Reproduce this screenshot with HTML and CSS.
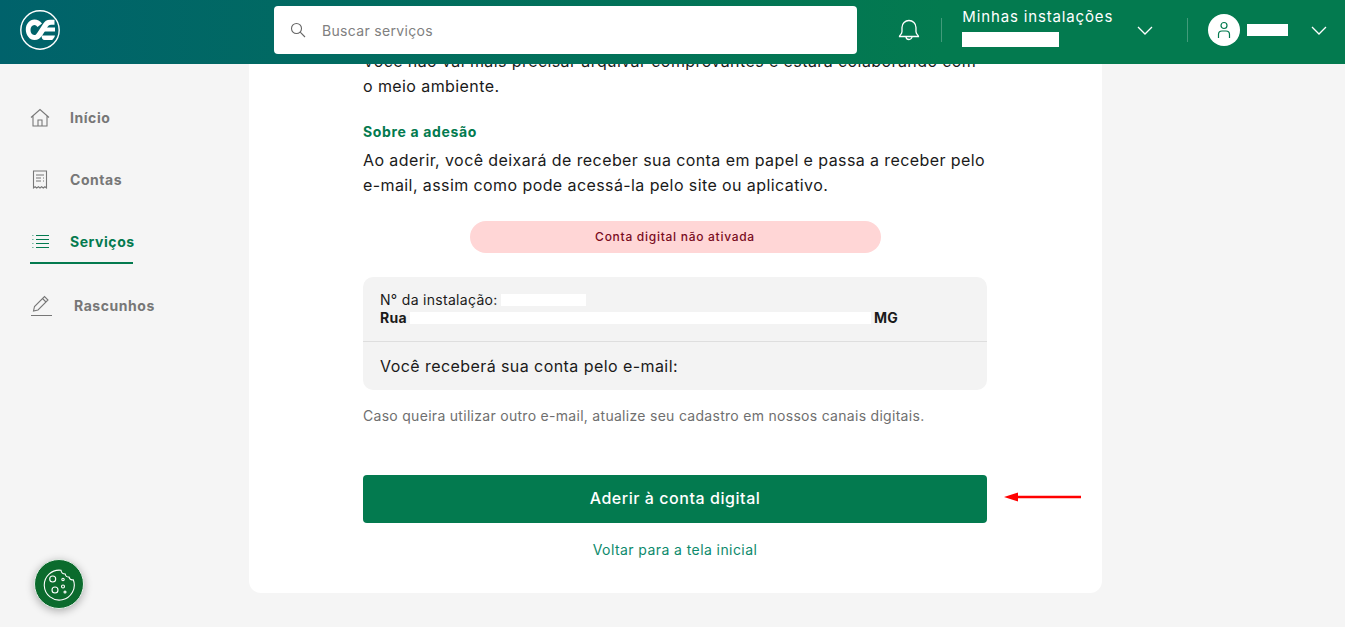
FILE: index.html
```html
<!DOCTYPE html>
<html lang="pt-BR">
<head>
    <meta charset="UTF-8">
    <title>Conta digital</title>
    <link rel="stylesheet" href="styles.css">
</head>
<body>
    <header class="topbar">
        <svg class="logo" width="40" height="40" viewBox="0 0 40 40" fill="none">
            <circle cx="20" cy="20" r="19.2" stroke="#fff" stroke-width="1.4"/>
            <path d="M22 13.500c-2-2.800-4.600-4-7.500-4C9.500 9.500 5.800 14 5.800 19.500S9.500 30 14.500 30c3.600 0 6-2 8-5l5-8c1-1.500 2-2.300 3.500-2.300h3.500V9.800H30c-3.300 0-5.300 1.500-7 4.200l-5.500 8.500c-1 1.600-1.900 2.600-3.300 2.600-2.300 0-3.700-2.200-3.700-5s1.500-5 3.800-5c1.300 0 2.300.7 3.200 2z" fill="#fff"/>
            <path d="M25 17.500h10v4H23zM21.500 25.500h13.500c-.6 2-1.500 3.400-2.800 4.500H24.500c-1.700 0-2.800-1-3-4.500z" fill="#fff"/>
        </svg>
        <div class="search">
            <svg width="16" height="16" viewBox="0 0 16 16" fill="none" stroke="#666" stroke-width="1.100">
                <circle cx="6.500" cy="6.500" r="5"/>
                <path d="M10.200 10.200l4.800 4.800"/>
            </svg>
            <span>Buscar serviços</span>
        </div>
        <svg class="bell" width="22" height="24" viewBox="0 0 22 24" fill="none" stroke="#fff" stroke-width="1.300">
            <path d="M1.500 18.500c0-1.500 2.500-2 2.500-5V9.500a7 7 0 0 1 14 0v4c0 3 2.500 3.500 2.500 5z"/>
            <path d="M8 18.500a3 3 0 0 0 6 0"/>
        </svg>
        <div class="divider"></div>
        <div class="installs">
            <span class="installs-title">Minhas instalações</span>
            <span class="mask mask-install"></span>
        </div>
        <svg class="chevron chevron-installs" width="16" height="9" viewBox="0 0 16 9" fill="none" stroke="#fff" stroke-width="1.300"><path d="M1 1l7 7 7-7"/></svg>
        <div class="divider"></div>
        <div class="avatar">
            <svg width="14" height="18" viewBox="0 0 14 18" fill="none" stroke="#037a4f" stroke-width="1.200">
                <circle cx="7" cy="4.500" r="3"/>
                <path d="M1.500 17v-3.500c0-2 1.500-3.500 3.500-3.500h4c2 0 3.500 1.500 3.500 3.500V17"/>
            </svg>
        </div>
        <span class="mask mask-user"></span>
        <svg class="chevron" width="16" height="9" viewBox="0 0 16 9" fill="none" stroke="#fff" stroke-width="1.300"><path d="M1 1l7 7 7-7"/></svg>
    </header>

    <div class="layout">
        <nav class="sidebar">
            <a class="nav-item">
                <svg width="20" height="20" viewBox="0 0 20 20" fill="none" stroke="#777" stroke-width="1.100">
                    <path d="M1 9.500L10 1.500l9 8M3 8v10h14V8M8 18v-6h4v6"/>
                </svg>
                <span>Início</span>
            </a>
            <a class="nav-item">
                <svg width="20" height="20" viewBox="0 0 20 20" fill="none" stroke="#777" stroke-width="1.100">
                    <path d="M3.500 1h13v17l-1.600-1.200-1.600 1.200-1.700-1.200L10 18l-1.600-1.200L6.700 18l-1.600-1.200L3.500 18z"/>
                    <path d="M6 5h8M6 8h5M13 8h1M6 11h5M13 11h1"/>
                </svg>
                <span>Contas</span>
            </a>
            <a class="nav-item active">
                <svg width="20" height="20" viewBox="0 0 20 20" fill="none" stroke="#037a4f" stroke-width="1.200">
                    <path d="M6 3.500h13M6 7.500h13M6 11.500h13M6 15.500h13"/>
                    <path d="M2.500 3.500h.8M2.500 7.500h.8M2.500 11.500h.8M2.500 15.500h.8"/>
                </svg>
                <span>Serviços</span>
            </a>
            <a class="nav-item draft">
                <svg width="24" height="22" viewBox="0 0 24 22" fill="none" stroke="#777" stroke-width="1.100">
                    <path d="M3.500 16l1-4.500L14.500 1.500l3.500 3.500-10 10z"/>
                    <path d="M12.500 3.500l3.500 3.500M1 20.500h21"/>
                </svg>
                <span>Rascunhos</span>
            </a>
            <button class="cookie">
                <svg width="34" height="34" viewBox="0 0 34 34" fill="none" stroke="#fff" stroke-width="1.100">
                    <path d="M19 3.200C19.300 5.500 21 7 23.200 7 23.500 9 25 10.300 27 10 27.600 12 29.300 13.200 31.300 12.800A15 15 0 1 1 19 3.200z"/>
                    <circle cx="10.700" cy="12" r="3"/>
                    <circle cx="13" cy="23" r="3"/>
                    <circle cx="21" cy="12.500" r="1.200"/>
                    <circle cx="21" cy="19.500" r="1.500"/>
                    <circle cx="23" cy="25" r="1"/>
                </svg>
            </button>
        </nav>

        <main class="content">
            <section class="card">
                <p class="text">Você não vai mais precisar arquivar comprovantes e estará colaborando com<br>o meio ambiente.</p>
                <h2 class="subtitle">Sobre a adesão</h2>
                <p class="text">Ao aderir, você deixará de receber sua conta em papel e passa a receber pelo<br>e-mail, assim como pode acessá-la pelo site ou aplicativo.</p>
                <div class="status">Conta digital não ativada</div>
                <div class="info">
                    <div class="info-top">
                        <div>N° da instalação:<span class="mask mask-number"></span></div>
                        <div class="address">Rua<span class="mask mask-address"></span>MG</div>
                    </div>
                    <div class="info-bottom">Você receberá sua conta pelo e-mail:</div>
                </div>
                <p class="note">Caso queira utilizar outro e-mail, atualize seu cadastro em nossos canais digitais.</p>
                <div class="action">
                    <button class="primary">Aderir à conta digital</button>
                    <svg class="arrow" width="80" height="12" viewBox="0 0 80 12">
                        <path d="M1 6L15 1.500V4.800H78V7.200H15V10.500z" fill="#f00"/>
                    </svg>
                </div>
                <a class="back">Voltar para a tela inicial</a>
            </section>
        </main>
    </div>
</body>
</html>
```

FILE: styles.css
```css
* {
    box-sizing: border-box;
}
html, body {
    height: 100%;
}
body {
    margin: 0;
    overflow: hidden;
    font-family: Inter, "Liberation Sans", sans-serif;
    background-color: #f5f5f5;
    color: #1a1a1a;
}
.topbar {
    height: 64px;
    display: flex;
    align-items: center;
    padding: 0 18px 4px 20px;
    background: linear-gradient(90deg, #00626b 0%, #037a4f 70%);
    color: white;
    position: relative;
    z-index: 2;
}
.logo {
    flex: none;
}
.search {
    width: 584px;
    height: 48px;
    margin-left: 214px;
    padding-left: 16px;
    display: flex;
    align-items: center;
    gap: 16px;
    background: white;
    border-radius: 4px;
    color: #808080;
    font-size: 14px;
    letter-spacing: 0.33px;
}
.bell {
    margin: 0 21px 0 41px;
}
.divider {
    width: 1px;
    height: 24px;
    background-color: rgba(255,255,255,0.25);
}
.installs {
    width: 175px;
    margin: -5px 0 0 20px;
    display: flex;
    flex-direction: column;
    gap: 6px;
}
.installs-title {
    font-size: 15px;
    line-height: 18px;
    letter-spacing: 0.85px;
}
.mask {
    display: inline-block;
    background: white;
}
.mask-install {
    width: 97px;
    height: 15px;
}
.chevron-installs {
    margin-right: 34px;
}
.avatar {
    width: 32px;
    height: 32px;
    margin: 0 7px 0 20px;
    display: flex;
    align-items: center;
    justify-content: center;
    border-radius: 50%;
    background: white;
}
.mask-user {
    width: 41px;
    height: 12px;
    margin-right: 23px;
}
.layout {
    height: 563px;
    display: flex;
}
.sidebar {
    width: 249px;
    flex: none;
    padding: 38px 0 0 30px;
    display: flex;
    flex-direction: column;
    align-items: flex-start;
    gap: 31px;
    position: relative;
}
.nav-item {
    height: 31px;
    display: flex;
    align-items: center;
    gap: 20px;
    color: #777;
    font-size: 14px;
    font-weight: 700;
}
.nav-item svg {
    flex: none;
}
.nav-item span {
    letter-spacing: 0.55px;
}
.nav-item.active {
    width: 103px;
    height: 38px;
    margin-bottom: -6px;
    padding-bottom: 5px;
    border-bottom: 2px solid #037a4f;
    color: #037a4f;
}
.nav-item.draft {
    gap: 20px;
    margin-top: 1px;
}
.cookie {
    position: absolute;
    left: 34px;
    bottom: 18px;
    width: 50px;
    height: 50px;
    padding: 0;
    display: flex;
    align-items: center;
    justify-content: center;
    background-color: #0b6b2d;
    border: 1px solid #e4efe7;
    border-radius: 50%;
    box-shadow: 0 2px 8px rgba(0,0,0,0.3);
}
.content {
    width: 853px;
    display: flex;
    flex-direction: column;
    justify-content: flex-end;
    overflow: hidden;
    padding-bottom: 34px;
}
.card {
    flex: none;
    padding: 0 115px 34px 114px;
    background: white;
    border-radius: 0 0 12px 12px;
}
.text {
    margin: 0;
    font-size: 16px;
    line-height: 25px;
    letter-spacing: 0.41px;
}
.subtitle {
    margin: 23px 0 6px;
    font-size: 14px;
    line-height: 20px;
    font-weight: 700;
    letter-spacing: 0.65px;
    color: #037a4f;
}
.status {
    width: 411px;
    height: 32px;
    margin: 23px auto 24px;
    padding-bottom: 1px;
    display: flex;
    align-items: center;
    justify-content: center;
    background-color: #ffd6d6;
    border-radius: 16px;
    color: #7a0c1e;
    font-size: 12px;
    font-weight: 500;
    letter-spacing: 0.72px;
}
.info {
    background-color: #f3f3f3;
    border-radius: 10px;
}
.info-top {
    height: 65px;
    padding: 14px 17px 0;
    border-bottom: 1px solid #dedede;
    font-size: 14px;
    line-height: 18px;
    letter-spacing: 0.3px;
}
.address {
    font-weight: 700;
}
.mask-number {
    width: 85px;
    height: 12px;
    margin-left: 3px;
    vertical-align: -1px;
}
.mask-address {
    width: 461px;
    height: 12px;
    margin: 0 3px;
    vertical-align: -1px;
}
.info-bottom {
    height: 48px;
    padding: 0 17px;
    display: flex;
    align-items: center;
    font-size: 16px;
    letter-spacing: 0.43px;
}
.note {
    margin: 16px 0 49px;
    font-size: 14px;
    line-height: 20px;
    letter-spacing: 0.29px;
    color: #6f6f6f;
}
.action {
    position: relative;
}
.primary {
    width: 100%;
    height: 48px;
    padding-bottom: 3px;
    border: none;
    border-radius: 4px;
    background-color: #037a4f;
    color: white;
    font-family: inherit;
    font-size: 16px;
    font-weight: 500;
    letter-spacing: 0.55px;
}
.arrow {
    position: absolute;
    left: 640px;
    top: 16px;
}
.back {
    display: block;
    margin-top: 18px;
    text-align: center;
    font-size: 14px;
    line-height: 18px;
    letter-spacing: 0.42px;
    color: #0c8a6c;
}
```
